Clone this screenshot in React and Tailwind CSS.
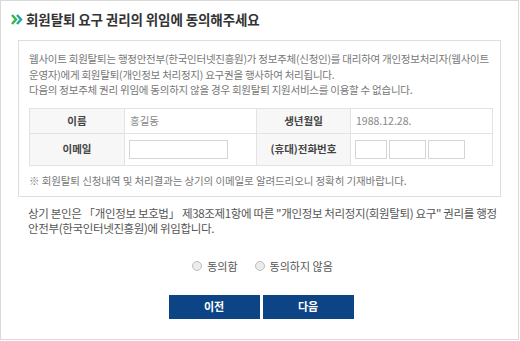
import { useState } from 'react'

const font = { fontFamily: '"Noto Sans CJK KR", "Noto Sans", sans-serif' }

function Chevrons() {
  return (
    <svg width="12" height="11" viewBox="0 0 12 11" className="shrink-0">
      <polyline points="1,1 5,5.5 1,10" fill="none" stroke="#39b54a" strokeWidth="2.4" />
      <polyline points="6,1 10,5.5 6,10" fill="none" stroke="#1fa8a0" strokeWidth="2.4" />
    </svg>
  )
}

function Radio({ label, checked, onClick }) {
  return (
    <label className="flex items-center gap-[5px] cursor-pointer" onClick={onClick}>
      <span className="w-[10px] h-[10px] rounded-full border border-[#bdbdbd] bg-[#ececec] flex items-center justify-center">
        {checked && <span className="w-[4px] h-[4px] rounded-full bg-[#555]" />}
      </span>
      <span>{label}</span>
    </label>
  )
}

export default function App() {
  const [agree, setAgree] = useState(null)

  return (
    <div className="w-[520px] h-[341px] bg-white" style={font}>
      <div className="w-[519px] h-[340px] border border-[#d9d9d9] flex flex-col">
        <div className="flex items-center gap-[3px] pl-[10px] pt-[8px] h-[29px]">
          <Chevrons />
          <h1 className="text-[13.5px] font-bold text-[#333] tracking-[-0.1px]">회원탈퇴 요구 권리의 위임에 동의해주세요</h1>
        </div>

        <div className="ml-[17px] mt-[10px] w-[483px] h-[157px] border border-[#dedede] px-[10px] pt-[10px]">
          <div className="text-[10.5px] leading-[15.5px] text-[#777] tracking-[-0.25px]">
            <p>웹사이트 회원탈퇴는 행정안전부(한국인터넷진흥원)가 정보주체(신청인)를 대리하여 개인정보처리자(웹사이트</p>
            <p>운영자)에게 회원탈퇴(개인정보 처리정지) 요구권을 행사하여 처리됩니다.</p>
            <p>다음의 정보주체 권리 위임에 동의하지 않을 경우 회원탈퇴 지원서비스를 이용할 수 없습니다.</p>
          </div>

          <table className="mt-[10px] w-[464px] border-collapse text-[10.5px]">
            <tbody>
              <tr className="h-[25px]">
                <th className="w-[95px] border border-[#e3e3e3] bg-[#f7f7f7] font-bold text-[#444]">이름</th>
                <td className="w-[132px] border border-[#e3e3e3] pl-[5px] text-[#888]">홍길동</td>
                <th className="w-[94px] border border-[#e3e3e3] bg-[#f7f7f7] font-bold text-[#444]">생년월일</th>
                <td className="border border-[#e3e3e3] pl-[5px] text-[#888]">1988.12.28.</td>
              </tr>
              <tr className="h-[32px]">
                <th className="border border-[#e3e3e3] bg-[#f7f7f7] font-bold text-[#444]">이메일</th>
                <td className="border border-[#e3e3e3] pl-[4px]">
                  <input className="block w-[99px] h-[19px] border border-[#d5d5d5] outline-none" />
                </td>
                <th className="border border-[#e3e3e3] bg-[#f7f7f7] font-bold text-[#444]">(휴대)전화번호</th>
                <td className="border border-[#e3e3e3] pl-[4px]">
                  <div className="flex gap-[2px]">
                    <input className="w-[32px] h-[19px] border border-[#d5d5d5] outline-none" />
                    <input className="w-[37px] h-[19px] border border-[#d5d5d5] outline-none" />
                    <input className="w-[37px] h-[19px] border border-[#d5d5d5] outline-none" />
                  </div>
                </td>
              </tr>
            </tbody>
          </table>

          <p className="mt-[7px] text-[10.5px] text-[#777] tracking-[-0.1px]">※ 회원탈퇴 신청내역 및 처리결과는 상기의 이메일로 알려드리오니 정확히 기재바랍니다.</p>
        </div>

        <div className="pl-[27px] pt-[9px] text-[11.5px] leading-[15px] text-[#555] tracking-[-0.35px]">
          <p>상기 본인은 「개인정보 보호법」 제38조제1항에 따른 "개인정보 처리정지(회원탈퇴) 요구" 권리를 행정</p>
          <p>안전부(한국인터넷진흥원)에 위임합니다.</p>
        </div>

        <div className="flex justify-center gap-[17px] mt-[22px] text-[11px] text-[#555] pl-[6px]">
          <Radio label="동의함" checked={agree === true} onClick={() => setAgree(true)} />
          <Radio label="동의하지 않음" checked={agree === false} onClick={() => setAgree(false)} />
        </div>

        <div className="flex justify-center gap-[3px] mt-[20px] pl-[3px]">
          <button className="w-[91px] h-[24px] bg-[#0c4486] text-white text-[11px] font-bold">이전</button>
          <button className="w-[91px] h-[24px] bg-[#0c4486] text-white text-[11px] font-bold">다음</button>
        </div>
      </div>
    </div>
  )
}
